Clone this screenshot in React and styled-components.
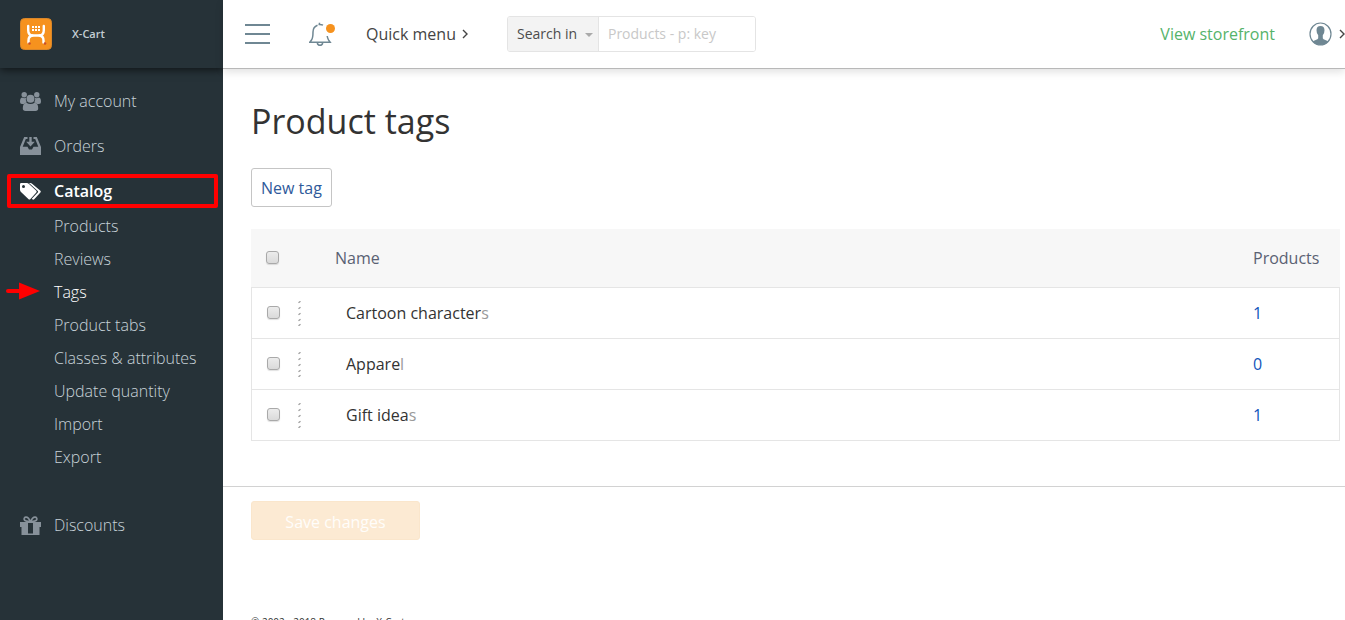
import React from "react";
import styled, { createGlobalStyle } from "styled-components";

const GlobalStyle = createGlobalStyle`
  *, *::before, *::after { box-sizing: border-box; }
  body {
    margin: 0;
    background: #fff;
    color: #333;
    font-family: "Open Sans", sans-serif;
    font-size: 16px;
    line-height: 24px;
  }
  button, input, select { font: inherit; }
  a { text-decoration: none; }
`;

const Shell = styled.div`
  display: flex;
  height: 100vh;
  overflow: hidden;
`;

const Sidebar = styled.aside`
  flex: 0 0 223px;
  overflow: hidden;
  background: #263238;
  color: #cfd8dc;
`;

const Brand = styled.a`
  display: flex;
  align-items: center;
  gap: 20px;
  height: 68px;
  padding-left: 20px;
  color: #c4ced3;
  font-size: 11px;
  font-weight: 600;
  box-shadow: 0 2px 8px rgba(0, 0, 0, 0.6);
`;

const Menu = styled.ul`
  display: flex;
  flex-direction: column;
  gap: 11px;
  list-style: none;
  margin: 0;
  padding: 16px 0 0;
`;

const MenuLink = styled.a`
  position: relative;
  display: flex;
  align-items: center;
  gap: 13px;
  height: 34px;
  padding-left: 20px;
  color: ${(p) => (p.$active ? "#fff" : "#c8d2d8")};
  font-weight: ${(p) => (p.$active ? 600 : 300)};
  svg { color: ${(p) => (p.$active ? "#fff" : "#87919a")}; }
`;

const Highlight = styled.span`
  position: absolute;
  inset: 0 5px 0 7px;
  border: 4px solid #f00;
  border-radius: 2px;
`;

const SubMenu = styled.ul`
  list-style: none;
  margin: 0;
  padding: 2px 0 23px;
`;

const SubLink = styled.a`
  position: relative;
  display: block;
  padding-left: 54px;
  line-height: 33px;
  color: ${(p) => (p.$active ? "#fff" : "#c8d2d8")};
  font-weight: 300;
`;

const Arrow = styled.svg`
  position: absolute;
  left: 6px;
  top: 6px;
`;

const Content = styled.div`
  flex: 1;
  min-width: 0;
`;

const TopBar = styled.header`
  display: flex;
  align-items: center;
  height: 69px;
  padding-left: 22px;
  border-bottom: 1px solid #b8b8b8;
  box-shadow: 0 3px 8px rgba(0, 0, 0, 0.12);
`;

const IconButton = styled.button`
  display: flex;
  padding: 0;
  border: 0;
  background: none;
  color: #6f8793;
`;

const Tools = styled.div`
  display: flex;
  align-items: center;
  gap: 39px;
`;

const QuickMenu = styled.button`
  display: flex;
  align-items: center;
  gap: 6px;
  margin-left: 31px;
  padding: 0;
  border: 0;
  background: none;
  color: #444;
`;

const Search = styled.form`
  display: flex;
  height: 36px;
  margin-left: 39px;
  border: 1px solid #e4e4e4;
  border-radius: 3px;
  overflow: hidden;
  font-size: 14px;
`;

const Scope = styled.label`
  position: relative;
  display: flex;
  align-items: center;
  background: #f3f3f3;
  border-right: 1px solid #e4e4e4;
  svg {
    position: absolute;
    right: 5px;
    top: 16px;
    pointer-events: none;
  }
`;

const ScopeSelect = styled.select`
  appearance: none;
  width: 90px;
  height: 34px;
  padding: 0 0 0 9px;
  border: 0;
  background: none;
  color: #4c4c4c;
  font-weight: 500;
`;

const SearchInput = styled.input`
  width: 156px;
  padding: 0 9px;
  border: 0;
  outline: 0;
  &::placeholder { color: #c8c8c8; opacity: 1; }
`;

const Account = styled.div`
  display: flex;
  align-items: center;
  gap: 34px;
  margin-left: auto;
`;

const StoreLink = styled.a`
  color: #55b36a;
`;

const AccountButton = styled(IconButton)`
  align-items: center;
  gap: 7px;
`;

const Page = styled.main`
  padding: 28px 5px 45px 28px;
`;

const Title = styled.h1`
  margin: 0;
  font-size: 34px;
  font-weight: 400;
  line-height: 48px;
`;

const NewTag = styled.button`
  display: block;
  height: 39px;
  margin: 23px 0 22px;
  padding: 0 9px;
  border: 1px solid #c5c5c5;
  border-radius: 3px;
  background: #fff;
  color: #2f5a9b;
`;

const Table = styled.table`
  width: 100%;
  table-layout: fixed;
  border-spacing: 0;
  text-align: left;
`;

const HeadCell = styled.th`
  height: 58px;
  padding: 0 0 0 ${(p) => p.$indent}px;
  width: ${(p) => p.$width};
  background: #f7f7f7;
  color: #5a6173;
  font-weight: 400;
`;

const Cell = styled.td`
  height: 51px;
  padding: 0 0 0 ${(p) => p.$indent}px;
  border-top: 1px solid #e5e5e5;
  &:first-child { border-left: 1px solid #e5e5e5; }
  &:last-child { border-right: 1px solid #e5e5e5; }
  tr:last-child > & { border-bottom: 1px solid #e5e5e5; height: 52px; }
`;

const Check = styled.input`
  appearance: none;
  display: block;
  width: 13px;
  height: 13px;
  margin: 0 0 2px;
  border: 1px solid #a9a9a9;
  border-radius: 3px;
  background: linear-gradient(#ececec, #dadada);
  box-shadow: 0 1px 1px rgba(0, 0, 0, 0.12);
`;

const RowTools = styled.div`
  display: flex;
  align-items: center;
  gap: 18px;
`;

const Fade = styled.span`
  color: #9a9a9a;
`;

const Count = styled.a`
  color: #1155bb;
`;

const SaveBar = styled.div`
  padding: 14px 28px 0;
  border-top: 1px solid #d2d2d2;
`;

const SaveButton = styled.button`
  display: block;
  width: 169px;
  height: 39px;
  padding: 2px 0 0;
  border: 1px solid #fae6cc;
  border-radius: 3px;
  background: #fcead3;
  color: #fffdfa;
  font-weight: 500;
`;

const Footer = styled.footer`
  padding: 72px 28px 0;
  font-size: 10px;
  line-height: 20px;
`;

const Logo = () => (
  <svg width="32" height="32" viewBox="0 0 32 32">
    <rect x="0.5" y="0.5" width="31" height="31" rx="4" fill="#f6921e" stroke="#d9862a" />
    <g fill="none" stroke="#fff" strokeWidth="2.400" strokeLinecap="round" strokeLinejoin="round">
      <path d="M8.200 8v4q0 5 4 5.500h7.600q4-.5 4-5.500V8" />
      <path d="M8.500 24.500v-2q0-4.500 4-5M23.500 24.500v-2q0-4.500-4-5" />
    </g>
    <g fill="#fff">
      {[8, 11].map((y) => [12, 15, 18].map((x) => <rect key={`${x}-${y}`} x={x} y={y} width="2" height="2" />))}
    </g>
    <circle cx="9.500" cy="25.500" r="1.300" fill="#c8502a" />
    <circle cx="25" cy="25.500" r="1.300" fill="#c8502a" />
  </svg>
);

const UsersIcon = () => (
  <svg width="21" height="19" viewBox="0 0 21 19" fill="currentColor">
    <circle cx="4.200" cy="2.800" r="2.700" />
    <circle cx="16.800" cy="2.800" r="2.700" />
    <path d="M2 6.300q2.200 1.200 4 .3q-.8 2.600.8 4.700q-1.600.2-2.800 1.400H2q-2 0-2-2q0-4 2-4.400zM19 6.300q-2.200 1.200-4 .3q.8 2.600-.8 4.700q1.600.2 2.800 1.400H19q2 0 2-2q0-4-2-4.400z" transform="translate(0 -.8)" />
    <circle cx="10.500" cy="6.800" r="4" />
    <path d="M6.300 10.700q4.200 2.600 8.400 0q3.500.4 3.500 5.600q0 2.700-2.700 2.700h-10q-2.700 0-2.700-2.700q0-5.200 3.500-5.600z" />
  </svg>
);

const OrdersIcon = () => (
  <svg width="21" height="18" viewBox="0 0 21 18" fill="currentColor">
    <path d="M4.200 0h3.300v2H5.800L2.700 9.800h4.800L9 12.500h3l1.500-2.700h4.800L15.200 2h-1.700V0h3.300L21 10v8H0v-8z" />
    <path d="M9.300 0h2.400v4.800h3.100l-4.300 4.700-4.300-4.700h3.100z" />
  </svg>
);

const TagsIcon = () => (
  <svg width="21" height="17" viewBox="0 0 21 17" fill="currentColor">
    <path fillRule="evenodd" d="M0 1.200Q0 0 1.200 0h5.600q1.200 0 2.200.9l7.300 6.900q.8.800 0 1.600l-6.100 6.800q-.8.800-1.600 0L1 9Q0 8 0 6.800zM3.500 2a1.500 1.500 0 1 0 0 3 1.500 1.500 0 1 0 0-3z" />
    <path d="M9 0h1.200q1.200 0 2.200.9l8 6.900q.8.800 0 1.600l-6.200 6.800q-.9.900-1.900.1l-.5-.6 6-6.300q.6-.7 0-1.300z" />
  </svg>
);

const GiftIcon = () => (
  <svg width="21" height="19" viewBox="0 0 21 19">
    <path d="M10.300 5.500Q8.500 1 6 1.100Q3.700 1.400 4.200 3.600Q4.900 5.500 10.300 5.500ZM10.700 5.500Q12.500 1 15 1.100Q17.300 1.400 16.800 3.600Q16.100 5.500 10.700 5.500Z" fill="none" stroke="currentColor" strokeWidth="1.600" />
    <path fillRule="evenodd" fill="currentColor" d="M0 6h21v5h-1.500v8h-18v-8H0zM8 7v10.500h5V7z" />
  </svg>
);

const MenuIcon = () => (
  <svg width="25" height="22" viewBox="0 0 25 22" fill="currentColor">
    <rect y="1" width="25" height="2" />
    <rect y="10" width="25" height="2" />
    <rect y="19" width="25" height="2" />
  </svg>
);

const BellIcon = () => (
  <svg width="26" height="24" viewBox="0 0 26 24" fill="none" stroke="currentColor" strokeWidth="1.500">
    <path d="M8.500 3.200Q4 5 4 10q0 6-1.500 8L.8 20.300h20.400l-1.700-2.400Q18.600 16.500 18.200 14" />
    <path d="M10.500 3V.8M9.500 2.600q2.500-.4 4.500.6" />
    <path d="M8.300 21q.4 2.200 2.700 2.200T13.700 21" />
    <circle cx="21.500" cy="6.500" r="4.500" fill="#f6921e" stroke="none" />
  </svg>
);

const Chevron = () => (
  <svg width="6" height="10" viewBox="0 0 6 10" fill="none" stroke="#444" strokeWidth="1.400">
    <path d="M1 1l4 4-4 4" />
  </svg>
);

const UserIcon = () => (
  <svg width="23" height="24" viewBox="0 0 23 24">
    <ellipse cx="11.500" cy="12" rx="10.500" ry="11" fill="#fff" stroke="currentColor" strokeWidth="1.200" />
    <path fill="currentColor" d="M11.500 4q4 0 4 4.300q0 3.300-1.700 5v3q.3 1 2.500 1.600q2 .5 3 1.600Q16.500 23 11.500 23T3.700 19.500q1-1.100 3-1.600q2.200-.6 2.500-1.600v-3q-1.700-1.700-1.700-5Q7.500 4 11.500 4z" />
  </svg>
);

const Handle = () => (
  <svg width="3" height="25" viewBox="0 0 3 25" stroke="#999" strokeWidth="1.200">
    {[0, 6, 12, 18, 23].map((y) => (
      <path key={y} d={`M.5 ${y + 1.8}l2-1.500`} />
    ))}
  </svg>
);

const SUB_ITEMS = ["Products", "Reviews", "Tags", "Product tabs", "Classes & attributes", "Update quantity", "Import", "Export"];

const TAGS = [
  { name: "Cartoon characters", products: 1 },
  { name: "Apparel", products: 0 },
  { name: "Gift ideas", products: 1 },
];

export default function App() {
  return (
    <>
      <GlobalStyle />
      <Shell>
        <Sidebar>
          <Brand href="#home"><Logo />X-Cart</Brand>
          <nav>
            <Menu>
              <li><MenuLink href="#account"><UsersIcon />My account</MenuLink></li>
              <li><MenuLink href="#orders"><OrdersIcon />Orders</MenuLink></li>
              <li>
                <MenuLink href="#catalog" $active><TagsIcon />Catalog<Highlight /></MenuLink>
                <SubMenu>
                  {SUB_ITEMS.map((item) => (
                    <li key={item}>
                      <SubLink href="#catalog" $active={item === "Tags"}>
                        {item === "Tags" && (
                          <Arrow width="34" height="18" viewBox="0 0 34 18" fill="#f00">
                            <rect y="7" width="16" height="4" rx="2" />
                            <path d="M13 0.500L34 9 13 17.500z" />
                          </Arrow>
                        )}
                        {item}
                      </SubLink>
                    </li>
                  ))}
                </SubMenu>
              </li>
              <li><MenuLink href="#discounts"><GiftIcon />Discounts</MenuLink></li>
            </Menu>
          </nav>
        </Sidebar>
        <Content>
          <TopBar>
            <Tools>
              <IconButton aria-label="Toggle menu"><MenuIcon /></IconButton>
              <IconButton aria-label="Notifications"><BellIcon /></IconButton>
            </Tools>
            <QuickMenu>Quick menu<Chevron /></QuickMenu>
            <Search>
              <Scope>
                <ScopeSelect aria-label="Search in"><option>Search in</option></ScopeSelect>
                <svg width="8" height="4" viewBox="0 0 8 4"><path d="M0 0h8L4 4z" fill="#aaa" /></svg>
              </Scope>
              <SearchInput aria-label="Search" placeholder="Products - p: key" />
            </Search>
            <Account>
              <StoreLink href="#storefront">View storefront</StoreLink>
              <AccountButton aria-label="Account"><UserIcon /><Chevron /></AccountButton>
            </Account>
          </TopBar>
          <Page>
            <Title>Product tags</Title>
            <NewTag>New tag</NewTag>
            <Table>
              <thead>
                <tr>
                  <HeadCell $width="84px" $indent={15}><Check type="checkbox" aria-label="Select all" /></HeadCell>
                  <HeadCell $width="auto" $indent={0}>Name</HeadCell>
                  <HeadCell $width="87px" $indent={0}>Products</HeadCell>
                </tr>
              </thead>
              <tbody>
                {TAGS.map(({ name, products }) => (
                  <tr key={name}>
                    <Cell $indent={15}>
                      <RowTools><Check type="checkbox" aria-label={`Select ${name}`} /><Handle /></RowTools>
                    </Cell>
                    <Cell $indent={11}>{name.slice(0, -1)}<Fade>{name.slice(-1)}</Fade></Cell>
                    <Cell $indent={0}><Count href="#products">{products}</Count></Cell>
                  </tr>
                ))}
              </tbody>
            </Table>
          </Page>
          <SaveBar>
            <SaveButton disabled>Save changes</SaveButton>
          </SaveBar>
          <Footer>© 2002 - 2018 Powered by X-Cart</Footer>
        </Content>
      </Shell>
    </>
  );
}
